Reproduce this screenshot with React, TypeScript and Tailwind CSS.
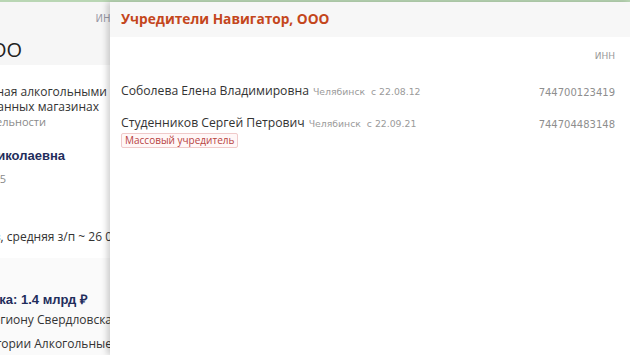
export default function App() {
	return (
		<div className="relative h-[355px] w-[630px] overflow-hidden bg-white font-['Open_Sans',sans-serif]">
			<div className="h-[2px] bg-[#b9d6b4]" />

			{/* background page, covered by the drawer */}
			<div className="w-[110px] overflow-hidden">
				<div className="flex h-[63px] flex-col bg-[#f6f6f6]">
					<div className="flex h-[32px] items-center justify-end whitespace-nowrap mr-[-8px] text-[10px] text-[#9a9aa6] font-['DejaVu_Sans',sans-serif]">
						ИНН
					</div>
					<div className="flex h-[31px] items-center justify-end whitespace-nowrap pr-[88px] text-[20px] leading-none text-[#222]">
						ООО
					</div>
				</div>
				<div className="pt-[19px] text-[12px] leading-[15px] text-[#333]">
					<div className="flex justify-end whitespace-nowrap pr-[3px]">
						Продажа розничная алкогольными
					</div>
					<div className="flex justify-end whitespace-nowrap pr-[11px]">
						в специализированных магазинах
					</div>
					<div className="flex justify-end whitespace-nowrap pr-[64px] text-[11px] text-[#8a8a8a]">
						основной деятельности
					</div>
				</div>
				<div className="mt-[17px] flex justify-end whitespace-nowrap pr-[45px] text-[13px] font-bold text-[#1f2d5c] font-['Liberation_Sans',sans-serif]">
					Ирина Николаевна
				</div>
				<div className="mt-[5px] flex justify-end whitespace-nowrap pr-[104px] text-[11px] text-[#8a8a8a]">
					с 2015
				</div>
				<div className="mt-[41px] flex justify-end whitespace-nowrap mr-[-2px] text-[12px] text-[#333]">
					12 сотрудников, средняя з/п ~ 26 0
				</div>
				<div className="mt-[12px] h-[120px] bg-[#fafafa] pt-[32px]">
					<div className="flex justify-end whitespace-nowrap pr-[22px] text-[13px] font-bold text-[#1f2d5c] font-['Liberation_Sans',sans-serif]">
						Выручка: 1.4 млрд ₽
					</div>
					<div className="mt-[1px] flex justify-end whitespace-nowrap mr-[-2px] text-[12px] text-[#333]">
						по региону Свердловска
					</div>
					<div className="mt-[6px] flex justify-end whitespace-nowrap mr-[-2px] text-[12px] text-[#333]">
						категории Алкогольные
					</div>
				</div>
			</div>

			{/* drawer */}
			<div className="absolute bottom-0 right-0 top-[2px] w-[520px] bg-white shadow-[-3px_0_6px_rgba(0,0,0,0.18)]">
				<div className="flex h-[35px] items-center bg-[#f7f7f7] px-[11px]">
					<h2 className="text-[13.7px] font-bold text-[#c4461c]">
						Учредители Навигатор, ООО
					</h2>
				</div>
				<div className="px-[11px] pr-[15px]">
					<div className="flex h-[39px] items-center justify-end text-[9px] text-[#999] font-['DejaVu_Sans',sans-serif]">
						ИНН
					</div>
					<div className="mt-[6px] flex items-start justify-between">
						<div className="flex items-baseline gap-[4px]">
							<span className="text-[12.2px] text-[#333]">
								Соболева Елена Владимировна
							</span>
							<span className="text-[9.3px] text-[#9a9a9a] font-['DejaVu_Sans',sans-serif]">
								Челябинск&nbsp; с 22.08.12
							</span>
						</div>
						<span className="pt-[3px] text-[10px] text-[#8e8e8e] font-['DejaVu_Sans',sans-serif]">
							744700123419
						</span>
					</div>
					<div className="mt-[14px] flex items-start justify-between">
						<div className="flex flex-col items-start">
							<div className="flex items-baseline gap-[4px]">
								<span className="text-[12.2px] text-[#333]">
									Студенников Сергей Петрович
								</span>
								<span className="text-[9.3px] text-[#9a9a9a] font-['DejaVu_Sans',sans-serif]">
									Челябинск&nbsp; с 22.09.21
								</span>
							</div>
							<span className="rounded-[2px] border border-[#f0caca] bg-[#fff7f7] px-[3px] text-[10px] leading-[13px] text-[#b8433f]">
								Массовый учредитель
							</span>
						</div>
						<span className="pt-[3px] text-[10px] text-[#8e8e8e] font-['DejaVu_Sans',sans-serif]">
							744704483148
						</span>
					</div>
				</div>
			</div>
		</div>
	);
}
